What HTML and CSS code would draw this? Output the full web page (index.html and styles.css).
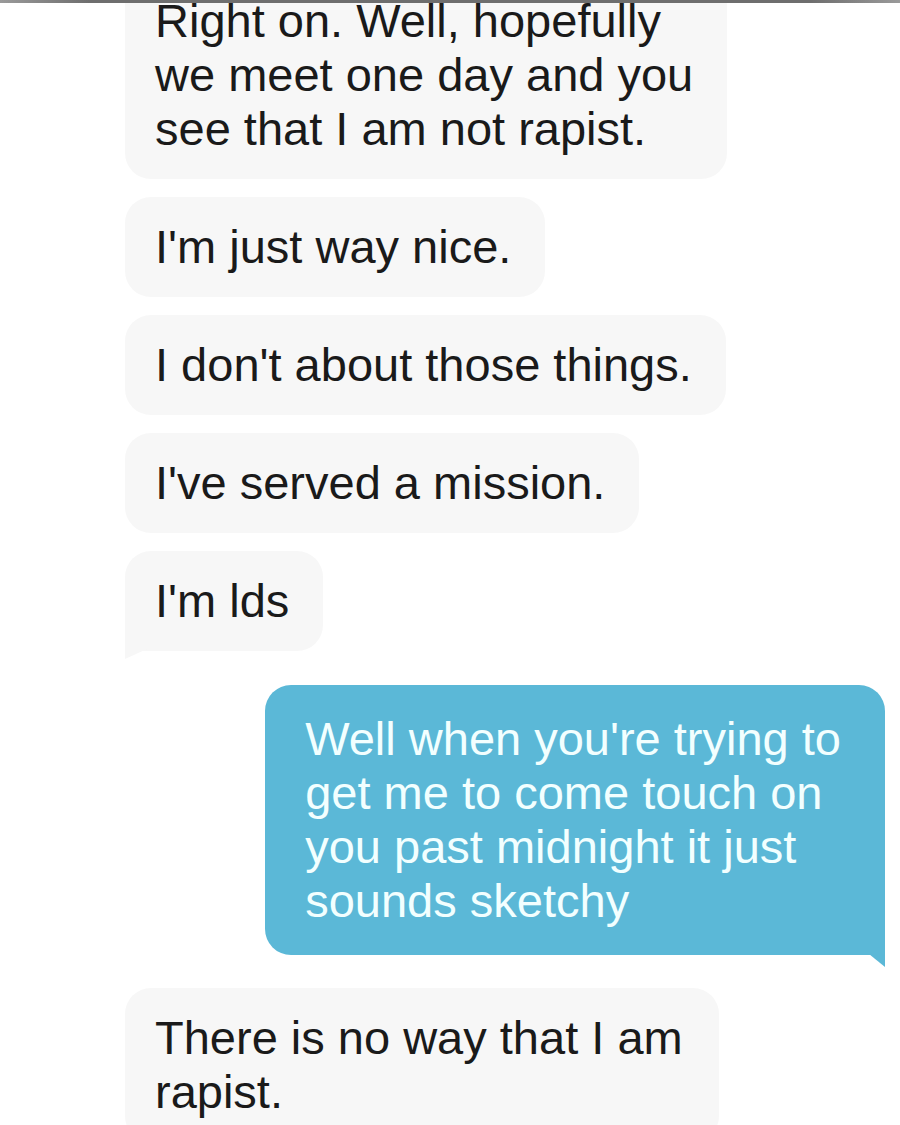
FILE: index.html
```html
<!DOCTYPE html>
<html lang="en">
<head>
<meta charset="utf-8">
<title>Messages</title>
<link rel="stylesheet" href="styles.css">
</head>
<body>
<div class="topbar"></div>
<div class="thread">
  <div class="msg in">Right on. Well, hopefully<br>we meet one day and you<br>see that I am not rapist.</div>
  <div class="msg in">I'm just way nice.</div>
  <div class="msg in">I don't about those things.</div>
  <div class="msg in">I've served a mission.</div>
  <div class="msg in tail">I'm lds</div>
  <div class="msg out tail">Well when you're trying to<br>get me to come touch on<br>you past midnight it just<br>sounds sketchy</div>
  <div class="msg in last">There is no way that I am<br>rapist.</div>
</div>
</body>
</html>
```

FILE: styles.css
```css
html, body {
  margin: 0;
  padding: 0;
  background: #ffffff;
  overflow: hidden;
}

body {
  width: 900px;
  height: 1125px;
  position: relative;
  font-family: "Liberation Sans", Arial, sans-serif;
}

.topbar {
  position: absolute;
  top: 0;
  left: 0;
  right: 0;
  height: 3px;
  background: linear-gradient(to right, #9a9a9a, #6e6e6e 10%, #6e6e6e 90%, #9a9a9a);
  z-index: 2;
}

.thread {
  display: flex;
  flex-direction: column;
  align-items: flex-start;
  gap: 18px;
  padding: 0 15px 0 125px;
  margin-top: -29px;
}

.msg {
  position: relative;
  font-size: 47px;
  line-height: 54px;
  padding: 23px 34px 23px 30px;
  border-radius: 26px;
  white-space: nowrap;
}

.msg.in {
  background: #f7f7f7;
  color: #1a1a1a;
}

.msg.out {
  align-self: flex-end;
  background: #5bb8d7;
  color: #f2ffff;
  padding: 27px 44px 27px 40px;
  margin-top: 16px;
  margin-bottom: 15px;
}

.msg.in.tail {
  border-bottom-left-radius: 0;
}

.msg.in.tail::after {
  content: "";
  position: absolute;
  left: 0;
  bottom: -8px;
  width: 22px;
  height: 10px;
  background: #f7f7f7;
  clip-path: polygon(0 0, 100% 0, 0 100%);
}

.msg.out.tail {
  border-bottom-right-radius: 0;
}

.msg.out.tail::after {
  content: "";
  position: absolute;
  right: 0;
  bottom: -12px;
  width: 16px;
  height: 13px;
  background: #5bb8d7;
  clip-path: polygon(0 0, 100% 0, 100% 100%);
}

.msg.last {
  padding-right: 36px;
}
```
